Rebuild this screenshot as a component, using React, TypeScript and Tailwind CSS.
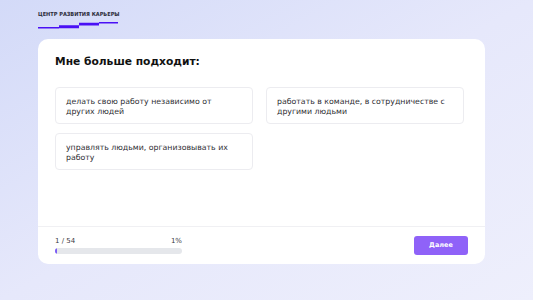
import React from "react";

const options = [
  "делать свою работу независимо от других людей",
  "работать в команде, в сотрудничестве с другими людьми",
  "управлять людьми, организовывать их работу",
];

function Logo() {
  return (
    <div className="flex flex-col w-[80px]">
      <span className="block w-[80px] font-['DejaVu_Sans_Condensed','DejaVu_Sans',sans-serif] font-bold text-[5.6px] leading-[8px] text-[#2b2b3a] whitespace-nowrap [text-align-last:justify] text-justify">
        ЦЕНТР РАЗВИТИЯ КАРЬЕРЫ
      </span>
      <svg width="80" height="8" viewBox="0 0 80 8" className="mt-[3px]">
        <path d="M0 6 H21 V4.2 H41 V1.8 H61 V1 H80 V2.6 H61 V4.6 H41 V7.2 H21 V7.5 H0 Z" fill="#4a10f5" />
      </svg>
    </div>
  );
}

export default function App() {
  const percent = 1;
  return (
    <div className="w-[533px] h-[300px] overflow-hidden bg-gradient-to-br from-[#d3daf8] via-[#e6e8fb] to-[#eeeffc] font-['DejaVu_Sans',sans-serif] px-[38px] pt-[10px]">
      <div className="h-[29px]">
        <Logo />
      </div>

      <div className="w-[447px] h-[225px] bg-white rounded-[10px] flex flex-col">
        <div className="flex-1 pl-[17px] pt-[16px]">
          <h1 className="text-[10.7px] leading-[14px] font-bold text-[#111]">Мне больше подходит:</h1>
          <div className="mt-[18px] grid grid-cols-[198px_198px] gap-x-[13px] gap-y-[9px]">
            {options.map((o) => (
              <button
                key={o}
                className="h-[37px] text-left border border-[#ececf0] rounded-[4px] px-[10px] pt-[9px] text-[7.8px] leading-[9.5px] text-[#2e2e33] flex items-start"
              >
                {o}
              </button>
            ))}
          </div>
        </div>

        <div className="h-[38px] border-t border-[#f0f0f3] flex items-center justify-between pl-[17px] pr-[17px]">
          <div className="w-[127px] flex flex-col">
            <div className="flex justify-between text-[7px] leading-[9px] text-[#3a3a44]">
              <span>1 / 54</span>
              <span>{percent}%</span>
            </div>
            <div className="mt-[2px] h-[6px] rounded-full bg-[#e5e7eb] overflow-hidden">
              <div className="h-full bg-[#7c5cf6] rounded-full" style={{ width: `${Math.max(percent, 1.5)}%` }} />
            </div>
          </div>
          <button className="w-[54px] h-[19px] rounded-[3px] bg-[#8f62f8] text-white text-[6.5px] font-bold flex items-center justify-center">
            Далее
          </button>
        </div>
      </div>
    </div>
  );
}
